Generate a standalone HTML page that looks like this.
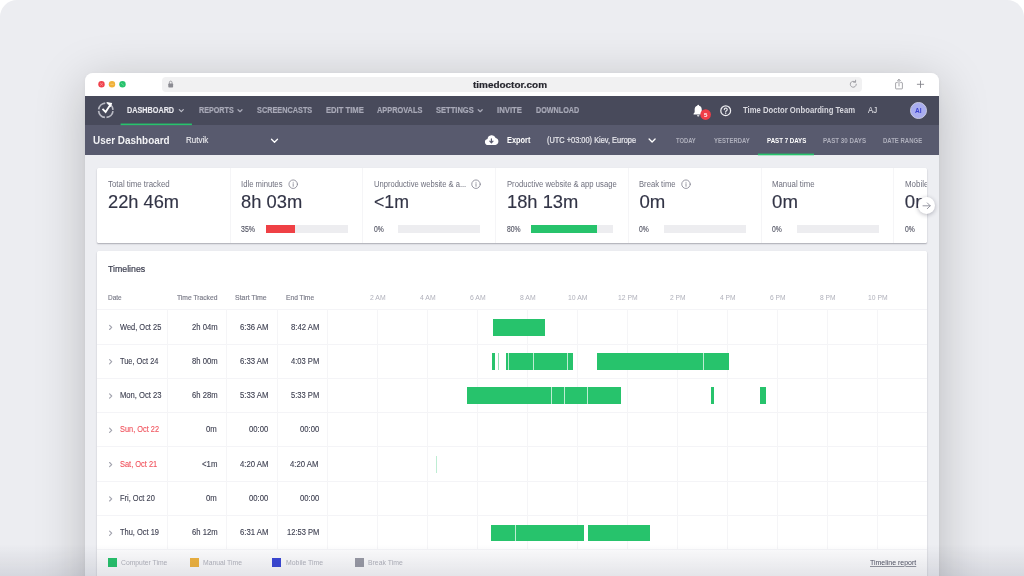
<!DOCTYPE html>
<html lang="en">
<head>
<meta charset="utf-8">
<title>Time Doctor – User Dashboard</title>
<style>
*{box-sizing:border-box;margin:0;padding:0}
html,body{width:1024px;height:576px;overflow:hidden;background:#fff;font-family:"Liberation Sans",sans-serif}
#stage{position:absolute;left:0;top:0;width:1024px;height:576px;background:#ecedf1;border-radius:17px 17px 0 0;overflow:hidden}
#win{position:absolute;left:85px;top:73px;width:854px;height:560px;border-radius:8px 8px 0 0;background:#edeef2;box-shadow:0 10px 50px rgba(0,0,0,.22),0 1px 4px rgba(0,0,0,.04)}
#win .in{position:absolute;inset:0;border-radius:8px 8px 0 0;overflow:hidden}
.abs,.t,svg{position:absolute}
.t{white-space:pre;transform-origin:0 50%}
#clip{position:absolute;left:0;top:0;width:927px;height:576px;overflow:hidden;will-change:transform}
#titlebar{left:0;top:0;width:854px;height:23px;background:#fff}
#url{left:77px;top:3.5px;width:700px;height:15.3px;border-radius:4px;background:#f1f1f2}
#nav{left:0;top:23px;width:854px;height:29px;background:#484a5b}
#sub{left:0;top:52px;width:854px;height:30px;background:#585a6e}
.card{background:#fff;border-radius:1.5px;box-shadow:0 1px 1.5px rgba(30,30,50,.32)}
.vsep{width:1px;background:#f5f5f7}
.hline{height:1px;background:#f4f4f7}
.track{height:8.6px;width:82.3px;background:#ededf0;top:224.5px}
.fill{height:8.6px;top:224.5px}
.bar{background:#27c36c;height:16.8px}
.gap{background:#fff;width:1px;height:16.8px;opacity:.7}
.lg{width:9px;height:8.8px;top:558.2px}
#fade{left:0;top:544px;width:1024px;height:32px;background:linear-gradient(to bottom,rgba(25,30,60,0),rgba(25,30,60,.1))}
</style>
</head>
<body>
<div id="stage">
<div id="win"><div class="in">
  <div id="titlebar" class="abs"></div>
  <div id="url" class="abs"></div>
  <div id="nav" class="abs"></div>
  <div id="sub" class="abs"></div>
</div></div>
<div class="abs card" style="left:97.20px;top:167.80px;width:829.80px;height:75.00px;"></div>
<div class="abs vsep" style="left:230.00px;top:167.80px;height:75.00px;"></div>
<div class="abs vsep" style="left:362.00px;top:167.80px;height:75.00px;"></div>
<div class="abs vsep" style="left:495.00px;top:167.80px;height:75.00px;"></div>
<div class="abs vsep" style="left:628.00px;top:167.80px;height:75.00px;"></div>
<div class="abs vsep" style="left:761.00px;top:167.80px;height:75.00px;"></div>
<div class="abs vsep" style="left:893.00px;top:167.80px;height:75.00px;"></div>
<div class="abs track" style="left:265.70px;top:224.50px;"></div>
<div class="abs fill" style="left:265.70px;top:224.50px;width:29.00px;background:#ef4045;"></div>
<div class="abs track" style="left:398.20px;top:224.50px;"></div>
<div class="abs track" style="left:531.10px;top:224.50px;"></div>
<div class="abs fill" style="left:531.10px;top:224.50px;width:66.04px;background:#27c36c;"></div>
<div class="abs track" style="left:663.80px;top:224.50px;"></div>
<div class="abs track" style="left:796.70px;top:224.50px;"></div>
<div class="abs card" style="left:97.20px;top:251.30px;width:829.80px;height:340.00px;"></div>
<div class="abs hline" style="left:97.20px;top:309.00px;width:829.80px;"></div>
<div class="abs hline" style="left:97.20px;top:344.00px;width:829.80px;"></div>
<div class="abs hline" style="left:97.20px;top:378.00px;width:829.80px;"></div>
<div class="abs hline" style="left:97.20px;top:412.00px;width:829.80px;"></div>
<div class="abs hline" style="left:97.20px;top:446.00px;width:829.80px;"></div>
<div class="abs hline" style="left:97.20px;top:481.00px;width:829.80px;"></div>
<div class="abs hline" style="left:97.20px;top:515.00px;width:829.80px;"></div>
<div class="abs hline" style="left:97.20px;top:549.00px;width:829.80px;"></div>
<div class="abs vsep" style="left:167.00px;top:309.40px;height:240.10px;"></div>
<div class="abs vsep" style="left:226.00px;top:309.40px;height:240.10px;"></div>
<div class="abs vsep" style="left:277.00px;top:309.40px;height:240.10px;"></div>
<div class="abs vsep" style="left:327.00px;top:309.40px;height:240.10px;"></div>
<div class="abs vsep" style="left:377.00px;top:309.40px;height:240.10px;"></div>
<div class="abs vsep" style="left:427.00px;top:309.40px;height:240.10px;"></div>
<div class="abs vsep" style="left:477.00px;top:309.40px;height:240.10px;"></div>
<div class="abs vsep" style="left:527.00px;top:309.40px;height:240.10px;"></div>
<div class="abs vsep" style="left:577.00px;top:309.40px;height:240.10px;"></div>
<div class="abs vsep" style="left:627.00px;top:309.40px;height:240.10px;"></div>
<div class="abs vsep" style="left:677.00px;top:309.40px;height:240.10px;"></div>
<div class="abs vsep" style="left:727.00px;top:309.40px;height:240.10px;"></div>
<div class="abs vsep" style="left:777.00px;top:309.40px;height:240.10px;"></div>
<div class="abs vsep" style="left:827.00px;top:309.40px;height:240.10px;"></div>
<div class="abs vsep" style="left:877.00px;top:309.40px;height:240.10px;"></div>
<div class="abs " style="left:97.20px;top:550.00px;width:829.80px;height:40.00px;background:#fcfcfd;"></div>
<div class="abs bar" style="left:493.10px;top:318.80px;width:52.10px;"></div>
<div class="abs bar" style="left:491.70px;top:353.10px;width:3.50px;"></div>
<div class="abs bar" style="left:497.90px;top:353.10px;width:0.80px;opacity:0.5;"></div>
<div class="abs bar" style="left:506.10px;top:353.10px;width:66.70px;"></div>
<div class="abs gap" style="left:508.45px;top:353.10px;"></div>
<div class="abs gap" style="left:533.10px;top:353.10px;"></div>
<div class="abs gap" style="left:566.60px;top:353.10px;"></div>
<div class="abs bar" style="left:596.70px;top:353.10px;width:132.05px;"></div>
<div class="abs gap" style="left:703.00px;top:353.10px;"></div>
<div class="abs bar" style="left:466.90px;top:387.40px;width:154.35px;"></div>
<div class="abs gap" style="left:550.60px;top:387.40px;"></div>
<div class="abs gap" style="left:564.20px;top:387.40px;"></div>
<div class="abs gap" style="left:587.40px;top:387.40px;"></div>
<div class="abs bar" style="left:711.40px;top:387.40px;width:2.80px;"></div>
<div class="abs bar" style="left:760.00px;top:387.40px;width:6.10px;"></div>
<div class="abs bar" style="left:436.00px;top:456.00px;width:0.80px;opacity:0.3;"></div>
<div class="abs bar" style="left:490.80px;top:524.60px;width:92.95px;"></div>
<div class="abs gap" style="left:515.20px;top:524.60px;"></div>
<div class="abs bar" style="left:588.00px;top:524.60px;width:61.80px;"></div>
<div class="abs lg" style="left:107.80px;top:558.20px;background:#27c36c;"></div>
<div class="abs lg" style="left:190.00px;top:558.20px;background:#f0b440;"></div>
<div class="abs lg" style="left:272.30px;top:558.20px;background:#3b48d6;"></div>
<div class="abs lg" style="left:354.80px;top:558.20px;background:#9a9ba6;"></div>
<div class="abs" style="left:909.7px;top:102px;width:17px;height:17px;border-radius:50%;background:#a9adef;border:.6px solid #c9cbe0"></div>
<svg width="1024" height="576" viewBox="0 0 1024 576" style="left:0;top:0;pointer-events:none" fill="none" stroke-linecap="round" stroke-linejoin="round">
<rect x="120.6" y="123.55" width="71.3" height="1.6" fill="#27c36c"/>
<rect x="757.9" y="153.6" width="56.1" height="1.7" fill="#27c36c"/>
<!-- traffic lights -->
<circle cx="101.5" cy="84.3" r="3.2" fill="#f0414c"/>
<circle cx="112" cy="84.3" r="3.2" fill="#f0b13a"/>
<circle cx="122.5" cy="84.3" r="3.2" fill="#27c26c"/>
<path d="M100.4 83.2l2.2 2.2M102.6 83.2l-2.2 2.2" stroke="#f7a0a4" stroke-width=".7"/>
<path d="M110.7 84.3h2.6" stroke="#f8d48e" stroke-width=".7"/>
<path d="M121.4 83.4l2.2 1.8" stroke="#7fdca7" stroke-width=".7"/>
<!-- lock -->
<rect x="168.3" y="83.6" width="4.8" height="3.9" rx=".7" fill="#8b8b92"/>
<path d="M169.4 83.6v-1.2a1.3 1.3 0 0 1 2.6 0v1.2" stroke="#8b8b92" stroke-width=".8"/>
<!-- reload -->
<path d="M856.3 84.2a3 3 0 1 1-1.1-2.3" stroke="#8e8e94" stroke-width=".8"/>
<path d="M855.6 80.2v2h-2" stroke="#8e8e94" stroke-width=".8"/>
<!-- share -->
<path d="M897.3 82.6h-1.200a.5.5 0 0 0-.5.5v5.300a.5.5 0 0 0 .5.5h5.800a.5.5 0 0 0 .5-.5v-5.300a.5.5 0 0 0-.5-.5h-1.200" stroke="#8e8e94" stroke-width=".8"/>
<path d="M899 86v-6.6M897.3 81l1.7-1.7 1.7 1.7" stroke="#8e8e94" stroke-width=".8"/>
<!-- plus -->
<path d="M917.3 84.3h6.4M920.5 81.1v6.4" stroke="#7d7d84" stroke-width=".85"/>
<!-- logo -->
<circle cx="105.8" cy="110.3" r="7.2" stroke="#b9bac4" stroke-width="1.7" stroke-dasharray="9.71 1.6" stroke-dashoffset="10.5" stroke-linecap="butt"/>
<path d="M102.5 108.9l3.1 3.1 4.9-7.6" stroke="#fff" stroke-width="1.8" stroke-linecap="butt" stroke-linejoin="miter"/>
<path d="M106.2 102l6 1.1-1.5 4.2z" fill="#fff" stroke="none"/>
<!-- nav chevrons -->
<path d="M179.3 109.7l2 2 2-2" stroke="#bfc0cb" stroke-width="1.15"/>
<path d="M238 109.7l2 2 2-2" stroke="#a8a9b7" stroke-width="1.25"/>
<path d="M478.2 109.7l2 2 2-2" stroke="#a8a9b7" stroke-width="1.25"/>
<!-- bell -->
<path d="M698.2 104.7c.55 0 .95.4.95.95 1.7.5 2.6 1.9 2.6 3.8v2.9l1.1 1.5v.6h-9.3v-.6l1.1-1.5v-2.9c0-1.900.900-3.300 2.600-3.800 0-.55.4-.95.95-.95z" fill="#fff" stroke="none"/>
<path d="M697 115.300h2.400a1.200 1.200 0 0 1-2.400 0z" fill="#fff" stroke="none"/>
<circle cx="705.600" cy="114.600" r="5.300" fill="#f03e48"/>
<!-- help -->
<circle cx="725.700" cy="110.700" r="4.900" stroke="#ececf0" stroke-width="1.250"/>
<path d="M724.300 109.600a1.450 1.450 0 1 1 2.200 1.250c-.55.350-.8.650-.8 1.250" stroke="#ececf0" stroke-width="1.200"/>
<circle cx="725.700" cy="113.600" r=".7" fill="#ececf0"/>
<!-- sub bar chevrons -->
<path d="M271.500 139.200l3 3 3-3" stroke="#fff" stroke-width="1.300"/>
<path d="M649.100 139.000l3 3 3-3" stroke="#fff" stroke-width="1.300"/>
<!-- cloud -->
<path d="M488 145.100a3.100 3.100 0 0 1-.5-6.150 4.300 4.300 0 0 1 8.200-1.050 3.700 3.700 0 0 1 -.300 7.200z" fill="#fff" stroke="none"/>
<path d="M491.400 138.900v3.300M489.800 141.200l1.600 1.700 1.600-1.700" stroke="#585a6e" stroke-width="1.200"/>
<!-- info icons -->
<g stroke="#868794" stroke-width=".85">
<circle cx="293.200" cy="184.200" r="4.250"/><path d="M293.200 183.700v2.600"/>
<circle cx="476" cy="184.200" r="4.250"/><path d="M476 183.700v2.600"/>
<circle cx="686" cy="184.200" r="4.250"/><path d="M686 183.700v2.600"/>
</g>
<g fill="#8b8c99"><circle cx="293.200" cy="182.200" r=".5"/><circle cx="476" cy="182.200" r=".5"/><circle cx="686" cy="182.200" r=".5"/></g>
<!-- row chevrons -->
<g stroke="#a2a3ae" stroke-width="1.15">
<path d="M109.600 325.300l2.100 2.100-2.100 2.100"/>
<path d="M109.600 359.600l2.100 2.100-2.100 2.100"/>
<path d="M109.600 393.900l2.100 2.100-2.100 2.100"/>
<path d="M109.600 428.200l2.100 2.100-2.100 2.100"/>
<path d="M109.600 462.500l2.100 2.100-2.100 2.100"/>
<path d="M109.600 496.800l2.100 2.100-2.100 2.100"/>
<path d="M109.600 531.100l2.100 2.100-2.100 2.100"/>
</g>
</svg>

<div id="clip">
<span class="t" style="left:473.00px;top:78.10px;font-size:9.9px;line-height:13px;color:#26262e;transform:scaleX(1.0064);font-weight:bold;-webkit-text-stroke:0.2px #26262e;">timedoctor.com</span>
<span class="t" style="left:126.90px;top:104.80px;font-size:8.6px;line-height:11px;color:#e9e9ee;transform:scaleX(0.8432);font-weight:bold;-webkit-text-stroke:0.15px #e9e9ee;">DASHBOARD</span>
<span class="t" style="left:198.50px;top:104.70px;font-size:8.6px;line-height:11px;color:#a8a9b7;transform:scaleX(0.8364);font-weight:bold;-webkit-text-stroke:0.2px #a8a9b7;">REPORTS</span>
<span class="t" style="left:257.00px;top:104.70px;font-size:8.6px;line-height:11px;color:#a8a9b7;transform:scaleX(0.8506);font-weight:bold;-webkit-text-stroke:0.2px #a8a9b7;">SCREENCASTS</span>
<span class="t" style="left:325.60px;top:104.70px;font-size:8.6px;line-height:11px;color:#a8a9b7;transform:scaleX(0.8894);font-weight:bold;-webkit-text-stroke:0.2px #a8a9b7;">EDIT TIME</span>
<span class="t" style="left:376.90px;top:104.70px;font-size:8.6px;line-height:11px;color:#a8a9b7;transform:scaleX(0.8582);font-weight:bold;-webkit-text-stroke:0.2px #a8a9b7;">APPROVALS</span>
<span class="t" style="left:435.60px;top:104.70px;font-size:8.6px;line-height:11px;color:#a8a9b7;transform:scaleX(0.8794);font-weight:bold;-webkit-text-stroke:0.2px #a8a9b7;">SETTINGS</span>
<span class="t" style="left:497.40px;top:104.70px;font-size:8.6px;line-height:11px;color:#a8a9b7;transform:scaleX(0.9024);font-weight:bold;-webkit-text-stroke:0.2px #a8a9b7;">INVITE</span>
<span class="t" style="left:535.50px;top:104.70px;font-size:8.6px;line-height:11px;color:#a8a9b7;transform:scaleX(0.8388);font-weight:bold;-webkit-text-stroke:0.2px #a8a9b7;">DOWNLOAD</span>
<span class="t" style="left:743.00px;top:104.80px;font-size:8.3px;line-height:11px;color:#d8d8df;transform:scaleX(0.9261);font-weight:bold;">Time Doctor Onboarding Team</span>
<span class="t" style="left:868.40px;top:104.80px;font-size:8.4px;line-height:11px;color:#dedee4;transform:scaleX(0.9406);-webkit-text-stroke:0.1px #dedee4;">AJ</span>
<span class="t" style="left:703.90px;top:110.70px;font-size:6.2px;line-height:8px;color:#ffffff;font-weight:bold;">5</span>
<span class="t" style="left:914.60px;top:106.10px;font-size:7px;line-height:9px;color:#3a40cf;transform:scaleX(0.9429);font-weight:bold;">AI</span>
<span class="t" style="left:92.75px;top:133.20px;font-size:10.9px;line-height:14px;color:#f2f2f5;transform:scaleX(0.9110);font-weight:bold;">User Dashboard</span>
<span class="t" style="left:185.90px;top:135.10px;font-size:8.2px;line-height:11px;color:#ececf0;transform:scaleX(0.9802);-webkit-text-stroke:0.1px #ececf0;">Rutvik</span>
<span class="t" style="left:506.60px;top:135.00px;font-size:8.2px;line-height:11px;color:#ffffff;transform:scaleX(0.9022);font-weight:bold;">Export</span>
<span class="t" style="left:547.25px;top:135.00px;font-size:8.4px;line-height:11px;color:#e8e8ed;transform:scaleX(0.8845);-webkit-text-stroke:0.2px #e8e8ed;">(UTC +03:00) Kiev, Europe</span>
<span class="t" style="left:676.25px;top:135.90px;font-size:7px;line-height:9px;color:#aeafbc;transform:scaleX(0.8321);font-weight:bold;">TODAY</span>
<span class="t" style="left:713.50px;top:135.90px;font-size:7px;line-height:9px;color:#aeafbc;transform:scaleX(0.8445);font-weight:bold;">YESTERDAY</span>
<span class="t" style="left:766.60px;top:135.90px;font-size:7px;line-height:9px;color:#ffffff;transform:scaleX(0.8782);font-weight:bold;">PAST 7 DAYS</span>
<span class="t" style="left:822.90px;top:135.90px;font-size:7px;line-height:9px;color:#aeafbc;transform:scaleX(0.8861);font-weight:bold;">PAST 30 DAYS</span>
<span class="t" style="left:883.10px;top:135.90px;font-size:7px;line-height:9px;color:#aeafbc;transform:scaleX(0.8554);font-weight:bold;">DATE RANGE</span>
<span class="t" style="left:108.40px;top:178.60px;font-size:8.3px;line-height:11px;color:#6e6f7d;transform:scaleX(0.9488);">Total time tracked</span>
<span class="t" style="left:108.40px;top:190.10px;font-size:18.6px;line-height:24px;color:#323446;transform:scaleX(0.9824);-webkit-text-stroke:0.15px #323446;">22h 46m</span>
<span class="t" style="left:241.30px;top:178.60px;font-size:8.3px;line-height:11px;color:#6e6f7d;transform:scaleX(0.9277);">Idle minutes</span>
<span class="t" style="left:241.30px;top:190.10px;font-size:18.6px;line-height:24px;color:#323446;transform:scaleX(0.9866);-webkit-text-stroke:0.15px #323446;">8h 03m</span>
<span class="t" style="left:241.30px;top:223.90px;font-size:8.2px;line-height:11px;color:#555665;transform:scaleX(0.8541);-webkit-text-stroke:0.15px #555665;">35%</span>
<span class="t" style="left:374.00px;top:178.60px;font-size:8.3px;line-height:11px;color:#6e6f7d;transform:scaleX(0.9129);">Unproductive website &amp; a...</span>
<span class="t" style="left:374.00px;top:190.10px;font-size:18.6px;line-height:24px;color:#323446;transform:scaleX(0.9536);-webkit-text-stroke:0.15px #323446;">&lt;1m</span>
<span class="t" style="left:374.00px;top:223.90px;font-size:8.2px;line-height:11px;color:#555665;transform:scaleX(0.8274);-webkit-text-stroke:0.15px #555665;">0%</span>
<span class="t" style="left:506.70px;top:178.60px;font-size:8.3px;line-height:11px;color:#6e6f7d;transform:scaleX(0.9254);">Productive website &amp; app usage</span>
<span class="t" style="left:506.70px;top:190.10px;font-size:18.6px;line-height:24px;color:#323446;transform:scaleX(0.9851);-webkit-text-stroke:0.15px #323446;">18h 13m</span>
<span class="t" style="left:506.70px;top:223.90px;font-size:8.2px;line-height:11px;color:#555665;transform:scaleX(0.8297);-webkit-text-stroke:0.15px #555665;">80%</span>
<span class="t" style="left:639.40px;top:178.60px;font-size:8.3px;line-height:11px;color:#6e6f7d;transform:scaleX(0.9204);">Break time</span>
<span class="t" style="left:639.40px;top:190.10px;font-size:18.6px;line-height:24px;color:#323446;-webkit-text-stroke:0.15px #323446;">0m</span>
<span class="t" style="left:639.40px;top:223.90px;font-size:8.2px;line-height:11px;color:#555665;transform:scaleX(0.8274);-webkit-text-stroke:0.15px #555665;">0%</span>
<span class="t" style="left:772.10px;top:178.60px;font-size:8.3px;line-height:11px;color:#6e6f7d;transform:scaleX(0.9424);">Manual time</span>
<span class="t" style="left:772.10px;top:190.10px;font-size:18.6px;line-height:24px;color:#323446;-webkit-text-stroke:0.15px #323446;">0m</span>
<span class="t" style="left:772.10px;top:223.90px;font-size:8.2px;line-height:11px;color:#555665;transform:scaleX(0.8274);-webkit-text-stroke:0.15px #555665;">0%</span>
<span class="t" style="left:904.80px;top:178.60px;font-size:8.3px;line-height:11px;color:#6e6f7d;transform:scaleX(0.9547);">Mobile time</span>
<span class="t" style="left:904.80px;top:190.10px;font-size:18.6px;line-height:24px;color:#323446;-webkit-text-stroke:0.15px #323446;">0m</span>
<span class="t" style="left:904.80px;top:223.90px;font-size:8.2px;line-height:11px;color:#555665;transform:scaleX(0.8274);-webkit-text-stroke:0.15px #555665;">0%</span>
<span class="t" style="left:108.30px;top:262.90px;font-size:9.2px;line-height:12px;color:#3b3d4e;transform:scaleX(0.9542);-webkit-text-stroke:0.2px #3b3d4e;">Timelines</span>
<span class="t" style="left:108.30px;top:292.50px;font-size:7px;line-height:9px;color:#7a7b88;transform:scaleX(0.9259);-webkit-text-stroke:0.15px #7a7b88;">Date</span>
<span class="t" style="left:176.75px;top:292.50px;font-size:7px;line-height:9px;color:#7a7b88;transform:scaleX(0.9599);-webkit-text-stroke:0.15px #7a7b88;">Time Tracked</span>
<span class="t" style="left:235.20px;top:292.50px;font-size:7px;line-height:9px;color:#7a7b88;transform:scaleX(0.9935);-webkit-text-stroke:0.15px #7a7b88;">Start Time</span>
<span class="t" style="left:285.80px;top:292.50px;font-size:7px;line-height:9px;color:#7a7b88;transform:scaleX(0.9500);-webkit-text-stroke:0.15px #7a7b88;">End Time</span>
<span class="t" style="left:369.70px;top:292.50px;font-size:7px;line-height:9px;color:#b0b1bb;transform:scaleX(0.9779);">2 AM</span>
<span class="t" style="left:419.70px;top:292.50px;font-size:7px;line-height:9px;color:#b0b1bb;transform:scaleX(0.9779);">4 AM</span>
<span class="t" style="left:469.70px;top:292.50px;font-size:7px;line-height:9px;color:#b0b1bb;transform:scaleX(0.9779);">6 AM</span>
<span class="t" style="left:519.70px;top:292.50px;font-size:7px;line-height:9px;color:#b0b1bb;transform:scaleX(0.9779);">8 AM</span>
<span class="t" style="left:567.70px;top:292.50px;font-size:7px;line-height:9px;color:#b0b1bb;transform:scaleX(0.9869);">10 AM</span>
<span class="t" style="left:617.70px;top:292.50px;font-size:7px;line-height:9px;color:#b0b1bb;transform:scaleX(0.9686);">12 PM</span>
<span class="t" style="left:669.70px;top:292.50px;font-size:7px;line-height:9px;color:#b0b1bb;transform:scaleX(0.9545);">2 PM</span>
<span class="t" style="left:719.70px;top:292.50px;font-size:7px;line-height:9px;color:#b0b1bb;transform:scaleX(0.9545);">4 PM</span>
<span class="t" style="left:769.70px;top:292.50px;font-size:7px;line-height:9px;color:#b0b1bb;transform:scaleX(0.9545);">6 PM</span>
<span class="t" style="left:819.70px;top:292.50px;font-size:7px;line-height:9px;color:#b0b1bb;transform:scaleX(0.9545);">8 PM</span>
<span class="t" style="left:867.70px;top:292.50px;font-size:7px;line-height:9px;color:#b0b1bb;transform:scaleX(0.9686);">10 PM</span>
<span class="t" style="left:119.70px;top:321.50px;font-size:8.2px;line-height:11px;color:#3f4152;transform:scaleX(0.9105);-webkit-text-stroke:0.12px #3f4152;">Wed, Oct 25</span>
<span class="t" style="left:191.60px;top:321.50px;font-size:8.2px;line-height:11px;color:#3f4152;transform:scaleX(0.9373);-webkit-text-stroke:0.12px #3f4152;">2h 04m</span>
<span class="t" style="left:239.60px;top:321.50px;font-size:8.2px;line-height:11px;color:#3f4152;transform:scaleX(0.9485);-webkit-text-stroke:0.12px #3f4152;">6:36 AM</span>
<span class="t" style="left:290.50px;top:321.50px;font-size:8.2px;line-height:11px;color:#3f4152;transform:scaleX(0.9452);-webkit-text-stroke:0.12px #3f4152;">8:42 AM</span>
<span class="t" style="left:119.70px;top:355.80px;font-size:8.2px;line-height:11px;color:#3f4152;transform:scaleX(0.9039);-webkit-text-stroke:0.12px #3f4152;">Tue, Oct 24</span>
<span class="t" style="left:191.60px;top:355.80px;font-size:8.2px;line-height:11px;color:#3f4152;transform:scaleX(0.9373);-webkit-text-stroke:0.12px #3f4152;">8h 00m</span>
<span class="t" style="left:239.60px;top:355.80px;font-size:8.2px;line-height:11px;color:#3f4152;transform:scaleX(0.9485);-webkit-text-stroke:0.12px #3f4152;">6:33 AM</span>
<span class="t" style="left:290.70px;top:355.80px;font-size:8.2px;line-height:11px;color:#3f4152;transform:scaleX(0.9246);-webkit-text-stroke:0.12px #3f4152;">4:03 PM</span>
<span class="t" style="left:119.70px;top:390.10px;font-size:8.2px;line-height:11px;color:#3f4152;transform:scaleX(0.9325);-webkit-text-stroke:0.12px #3f4152;">Mon, Oct 23</span>
<span class="t" style="left:191.60px;top:390.10px;font-size:8.2px;line-height:11px;color:#3f4152;transform:scaleX(0.9373);-webkit-text-stroke:0.12px #3f4152;">6h 28m</span>
<span class="t" style="left:239.60px;top:390.10px;font-size:8.2px;line-height:11px;color:#3f4152;transform:scaleX(0.9485);-webkit-text-stroke:0.12px #3f4152;">5:33 AM</span>
<span class="t" style="left:290.70px;top:390.10px;font-size:8.2px;line-height:11px;color:#3f4152;transform:scaleX(0.9246);-webkit-text-stroke:0.12px #3f4152;">5:33 PM</span>
<span class="t" style="left:119.70px;top:424.40px;font-size:8.2px;line-height:11px;color:#f0525c;transform:scaleX(0.9017);-webkit-text-stroke:0.12px #f0525c;">Sun, Oct 22</span>
<span class="t" style="left:206.40px;top:424.40px;font-size:8.2px;line-height:11px;color:#3f4152;transform:scaleX(0.9495);-webkit-text-stroke:0.12px #3f4152;">0m</span>
<span class="t" style="left:248.90px;top:424.40px;font-size:8.2px;line-height:11px;color:#3f4152;transform:scaleX(0.9366);-webkit-text-stroke:0.12px #3f4152;">00:00</span>
<span class="t" style="left:299.70px;top:424.40px;font-size:8.2px;line-height:11px;color:#3f4152;transform:scaleX(0.9366);-webkit-text-stroke:0.12px #3f4152;">00:00</span>
<span class="t" style="left:119.70px;top:458.70px;font-size:8.2px;line-height:11px;color:#f0525c;transform:scaleX(0.9080);-webkit-text-stroke:0.12px #f0525c;">Sat, Oct 21</span>
<span class="t" style="left:201.80px;top:458.70px;font-size:8.2px;line-height:11px;color:#3f4152;transform:scaleX(0.9532);-webkit-text-stroke:0.12px #3f4152;">&lt;1m</span>
<span class="t" style="left:239.60px;top:458.70px;font-size:8.2px;line-height:11px;color:#3f4152;transform:scaleX(0.9485);-webkit-text-stroke:0.12px #3f4152;">4:20 AM</span>
<span class="t" style="left:290.40px;top:458.70px;font-size:8.2px;line-height:11px;color:#3f4152;transform:scaleX(0.9485);-webkit-text-stroke:0.12px #3f4152;">4:20 AM</span>
<span class="t" style="left:119.70px;top:493.00px;font-size:8.2px;line-height:11px;color:#3f4152;transform:scaleX(0.9105);-webkit-text-stroke:0.12px #3f4152;">Fri, Oct 20</span>
<span class="t" style="left:206.40px;top:493.00px;font-size:8.2px;line-height:11px;color:#3f4152;transform:scaleX(0.9495);-webkit-text-stroke:0.12px #3f4152;">0m</span>
<span class="t" style="left:248.90px;top:493.00px;font-size:8.2px;line-height:11px;color:#3f4152;transform:scaleX(0.9366);-webkit-text-stroke:0.12px #3f4152;">00:00</span>
<span class="t" style="left:299.70px;top:493.00px;font-size:8.2px;line-height:11px;color:#3f4152;transform:scaleX(0.9366);-webkit-text-stroke:0.12px #3f4152;">00:00</span>
<span class="t" style="left:119.70px;top:527.30px;font-size:8.2px;line-height:11px;color:#3f4152;transform:scaleX(0.9116);-webkit-text-stroke:0.12px #3f4152;">Thu, Oct 19</span>
<span class="t" style="left:191.60px;top:527.30px;font-size:8.2px;line-height:11px;color:#3f4152;transform:scaleX(0.9373);-webkit-text-stroke:0.12px #3f4152;">6h 12m</span>
<span class="t" style="left:239.60px;top:527.30px;font-size:8.2px;line-height:11px;color:#3f4152;transform:scaleX(0.9485);-webkit-text-stroke:0.12px #3f4152;">6:31 AM</span>
<span class="t" style="left:286.60px;top:527.30px;font-size:8.2px;line-height:11px;color:#3f4152;transform:scaleX(0.9216);-webkit-text-stroke:0.12px #3f4152;">12:53 PM</span>
<span class="t" style="left:120.80px;top:558.10px;font-size:7.3px;line-height:9px;color:#b3b4bd;transform:scaleX(0.9300);">Computer Time</span>
<span class="t" style="left:203.20px;top:558.10px;font-size:7.3px;line-height:9px;color:#b3b4bd;transform:scaleX(0.9334);">Manual Time</span>
<span class="t" style="left:285.60px;top:558.10px;font-size:7.3px;line-height:9px;color:#b3b4bd;transform:scaleX(0.9455);">Mobile Time</span>
<span class="t" style="left:367.80px;top:558.10px;font-size:7.3px;line-height:9px;color:#b3b4bd;transform:scaleX(0.9402);">Break Time</span>
<span class="t" style="left:869.60px;top:557.60px;font-size:7.4px;line-height:10px;color:#505263;transform:scaleX(0.9426);text-decoration:underline;text-decoration-thickness:.7px;text-underline-offset:1px;text-decoration-color:rgba(80,82,99,.6);">Timeline report</span>
</div>
<div class="abs" style="left:918.3px;top:197.4px;width:16.8px;height:16.8px;border-radius:50%;background:#fff;box-shadow:0 1px 4px rgba(30,30,50,.3)"></div>
<svg width="1024" height="576" viewBox="0 0 1024 576" style="left:0;top:0" fill="none" stroke-linecap="round" stroke-linejoin="round">
<path d="M923 205.800h7.200M927.300 202.900l2.900 2.900-2.900 2.900" stroke="#8b8c99" stroke-width=".9"/>
</svg>

<div id="fade" class="abs"></div>
</div>
</body>
</html>
